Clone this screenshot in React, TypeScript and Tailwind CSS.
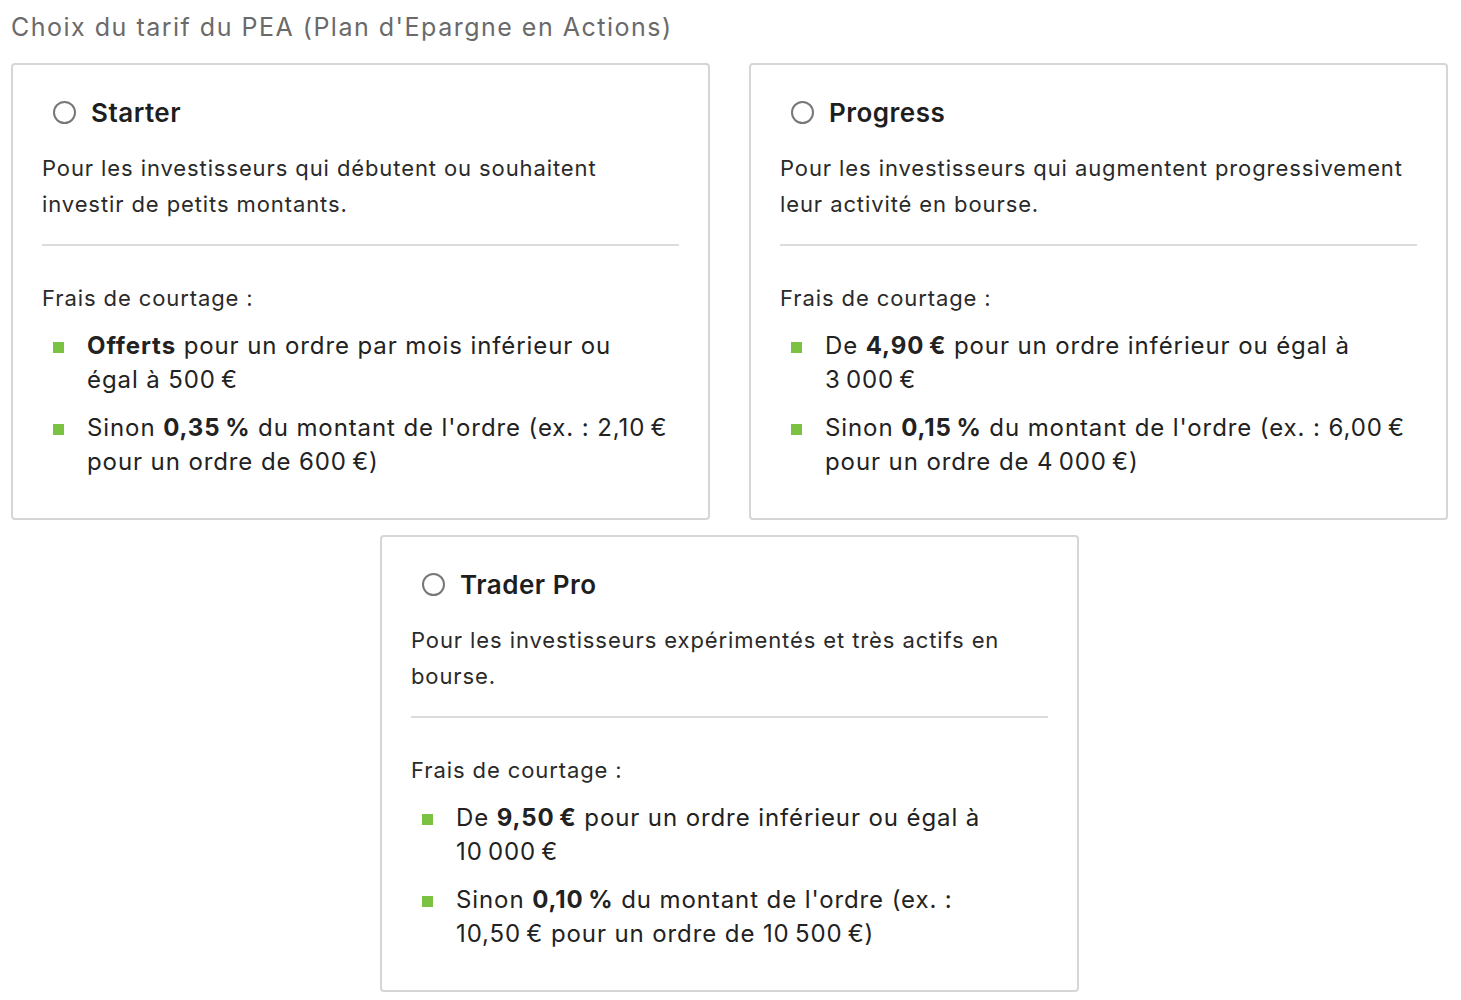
import React from "react";

type Plan = {
  name: string;
  desc: React.ReactNode;
  items: React.ReactNode[];
};

const plans: Plan[] = [
  {
    name: "Starter",
    desc: (
      <>
        Pour les investisseurs qui débutent ou souhaitent
        <br />
        investir de petits montants.
      </>
    ),
    items: [
      <>
        <b className="font-bold">Offerts</b> pour un ordre par mois inférieur ou
        <br />
        égal à 500&#8239;€
      </>,
      <>
        Sinon <b className="font-bold">0,35&#8239;%</b> du montant de l'ordre (ex.&nbsp;: 2,10&#8239;€
        <br />
        pour un ordre de 600&#8239;€)
      </>,
    ],
  },
  {
    name: "Progress",
    desc: (
      <>
        Pour les investisseurs qui augmentent progressivement
        <br />
        leur activité en bourse.
      </>
    ),
    items: [
      <>
        De <b className="font-bold">4,90&#8239;€</b> pour un ordre inférieur ou égal à
        <br />
        3&#8239;000&#8239;€
      </>,
      <>
        Sinon <b className="font-bold">0,15&#8239;%</b> du montant de l'ordre (ex.&nbsp;: 6,00&#8239;€
        <br />
        pour un ordre de 4&#8239;000&#8239;€)
      </>,
    ],
  },
  {
    name: "Trader Pro",
    desc: (
      <>
        Pour les investisseurs expérimentés et très actifs en
        <br />
        bourse.
      </>
    ),
    items: [
      <>
        De <b className="font-bold">9,50&#8239;€</b> pour un ordre inférieur ou égal à
        <br />
        10&#8239;000&#8239;€
      </>,
      <>
        Sinon <b className="font-bold">0,10&#8239;%</b> du montant de l'ordre (ex.&nbsp;:
        <br />
        10,50&#8239;€ pour un ordre de 10&#8239;500&#8239;€)
      </>,
    ],
  },
];

const PlanCard = ({ plan }: { plan: Plan }) => {
  return (
    <div className="w-[699px] h-[457px] rounded-[4px] border-2 border-[#d6d6d6] bg-white px-[29px] pt-[29px]">
      <label className="flex items-center h-[36px] cursor-pointer">
        <span className="ml-[11px] w-[23px] h-[23px] rounded-full border-2 border-[#777] bg-white"></span>
        <span className="ml-[15px] text-[26px] font-semibold text-[#1e1e1e] tracking-[0.5px]">
          {plan.name}
        </span>
      </label>
      <p className="mt-[20px] text-[22px] leading-[36px] tracking-[0.9px] text-[#2a2a2a] whitespace-nowrap">
        {plan.desc}
      </p>
      <div className="mt-[22px] h-[2px] bg-[#dcdcdc]"></div>
      <p className="mt-[34px] text-[22px] leading-[36px] tracking-[0.9px] text-[#2a2a2a]">
        Frais de courtage :
      </p>
      <ul className="mt-[13px] flex flex-col gap-[14px]">
        {plan.items.map((item, i) => (
          <li
            key={i}
            className="flex text-[24px] leading-[34px] tracking-[0.9px] text-[#222] whitespace-nowrap"
          >
            <span className="mt-[13px] ml-[11px] w-[11px] h-[11px] bg-[#7cc242] shrink-0"></span>
            <span className="ml-[23px]">{item}</span>
          </li>
        ))}
      </ul>
    </div>
  );
};

export default function App() {
  return (
    <div
      className="bg-white min-h-[1000px] pl-[11px] pt-[8px]"
      style={{ fontFamily: "Inter, 'Noto Sans', sans-serif" }}
    >
      <h2 className="text-[25px] leading-[38px] tracking-[1.5px] text-[#6a6a6a] font-normal">
        Choix du tarif du PEA (Plan d'Epargne en Actions)
      </h2>
      <div className="mt-[17px] w-[1437px] flex flex-wrap justify-center gap-x-[39px] gap-y-[15px]">
        {plans.map((p) => (
          <PlanCard key={p.name} plan={p} />
        ))}
      </div>
    </div>
  );
}
